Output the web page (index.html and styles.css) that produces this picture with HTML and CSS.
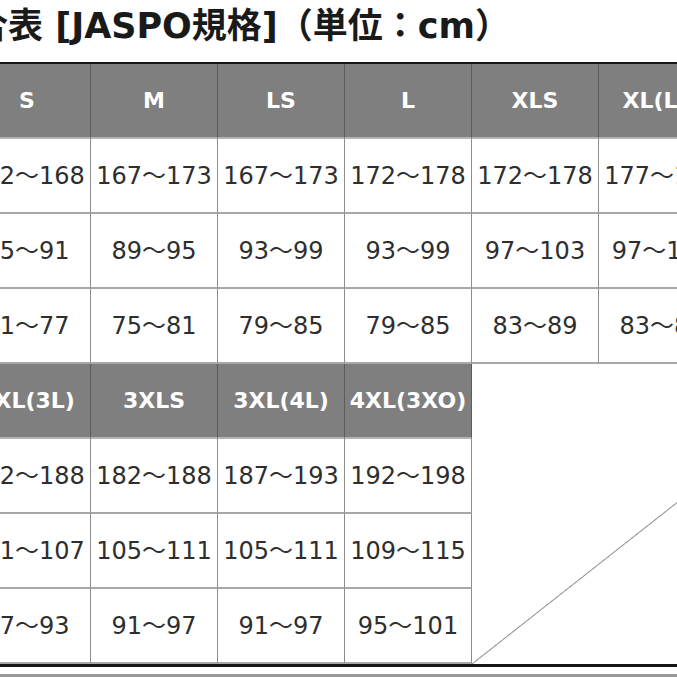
FILE: index.html
```html
<!DOCTYPE html>
<html lang="ja">
<head>
<meta charset="utf-8">
<title>サイズ適合表</title>
<link rel="stylesheet" href="styles.css">
</head>
<body>
<div class="sheet">
  <h1 class="title">サイズ適合表 [JASPO規格]（単位：cm）</h1>
  <div class="chart">
    <div class="cell head">S</div>
    <div class="cell head">M</div>
    <div class="cell head">LS</div>
    <div class="cell head">L</div>
    <div class="cell head">XLS</div>
    <div class="cell head">XL(LL)</div>
    <div class="cell head">2XLS</div>

    <div class="cell">162〜168</div>
    <div class="cell">167〜173</div>
    <div class="cell">167〜173</div>
    <div class="cell">172〜178</div>
    <div class="cell">172〜178</div>
    <div class="cell">177〜183</div>
    <div class="cell">177〜183</div>

    <div class="cell">85〜91</div>
    <div class="cell">89〜95</div>
    <div class="cell">93〜99</div>
    <div class="cell">93〜99</div>
    <div class="cell">97〜103</div>
    <div class="cell">97〜103</div>
    <div class="cell">101〜107</div>

    <div class="cell">71〜77</div>
    <div class="cell">75〜81</div>
    <div class="cell">79〜85</div>
    <div class="cell">79〜85</div>
    <div class="cell">83〜89</div>
    <div class="cell">83〜89</div>
    <div class="cell">87〜93</div>

    <div class="cell head">2XL(3L)</div>
    <div class="cell head">3XLS</div>
    <div class="cell head">3XL(4L)</div>
    <div class="cell head">4XL(3XO)</div>
    <div class="blank"></div>

    <div class="cell">182〜188</div>
    <div class="cell">182〜188</div>
    <div class="cell">187〜193</div>
    <div class="cell">192〜198</div>

    <div class="cell">101〜107</div>
    <div class="cell">105〜111</div>
    <div class="cell">105〜111</div>
    <div class="cell">109〜115</div>

    <div class="cell">87〜93</div>
    <div class="cell">91〜97</div>
    <div class="cell">91〜97</div>
    <div class="cell">95〜101</div>
  </div>
  <div class="foot"></div>
</div>
</body>
</html>
```

FILE: styles.css
```css
html, body {
  margin: 0;
  padding: 0;
  background: #ffffff;
}

body {
  width: 677px;
  height: 677px;
  overflow: hidden;
}

.sheet {
  margin-left: -36px;
  width: 889px;
}

.title {
  margin: 0;
  height: 62px;
  box-sizing: border-box;
  font-family: "DejaVu Sans", "Noto Sans CJK JP", sans-serif;
  font-weight: bold;
  font-size: 35px;
  line-height: 52px;
  color: #1a1a1a;
  white-space: nowrap;
  text-indent: -130px;
}

.chart {
  display: grid;
  grid-template-columns: repeat(7, 127px);
  grid-auto-rows: 75px;
  border-top: 2px solid #151515;
  border-bottom: 3px solid #151515;
}

.cell {
  box-sizing: border-box;
  display: flex;
  align-items: center;
  justify-content: center;
  padding-bottom: 4px;
  border-right: 1px solid #8c8c8c;
  border-bottom: 2px solid #a8a8a8;
  font-family: "DejaVu Sans", "Noto Sans CJK JP", sans-serif;
  font-size: 24px;
  color: #2e2e2e;
  white-space: nowrap;
}

.head {
  background: #7f7f7f;
  color: #ffffff;
  font-weight: bold;
  font-size: 22px;
  padding-bottom: 0;
  border-right-color: #5c5c5c;
  border-bottom-color: #b4b4b4;
}

.blank {
  grid-column: 5 / span 3;
  grid-row: 5 / span 4;
  background: linear-gradient(to bottom right, transparent calc(50% - 1px), #8f8f8f 50%, transparent calc(50% + 1px));
}

.foot {
  margin-top: 7px;
  height: 3px;
  background: #9a9a9a;
}
```
